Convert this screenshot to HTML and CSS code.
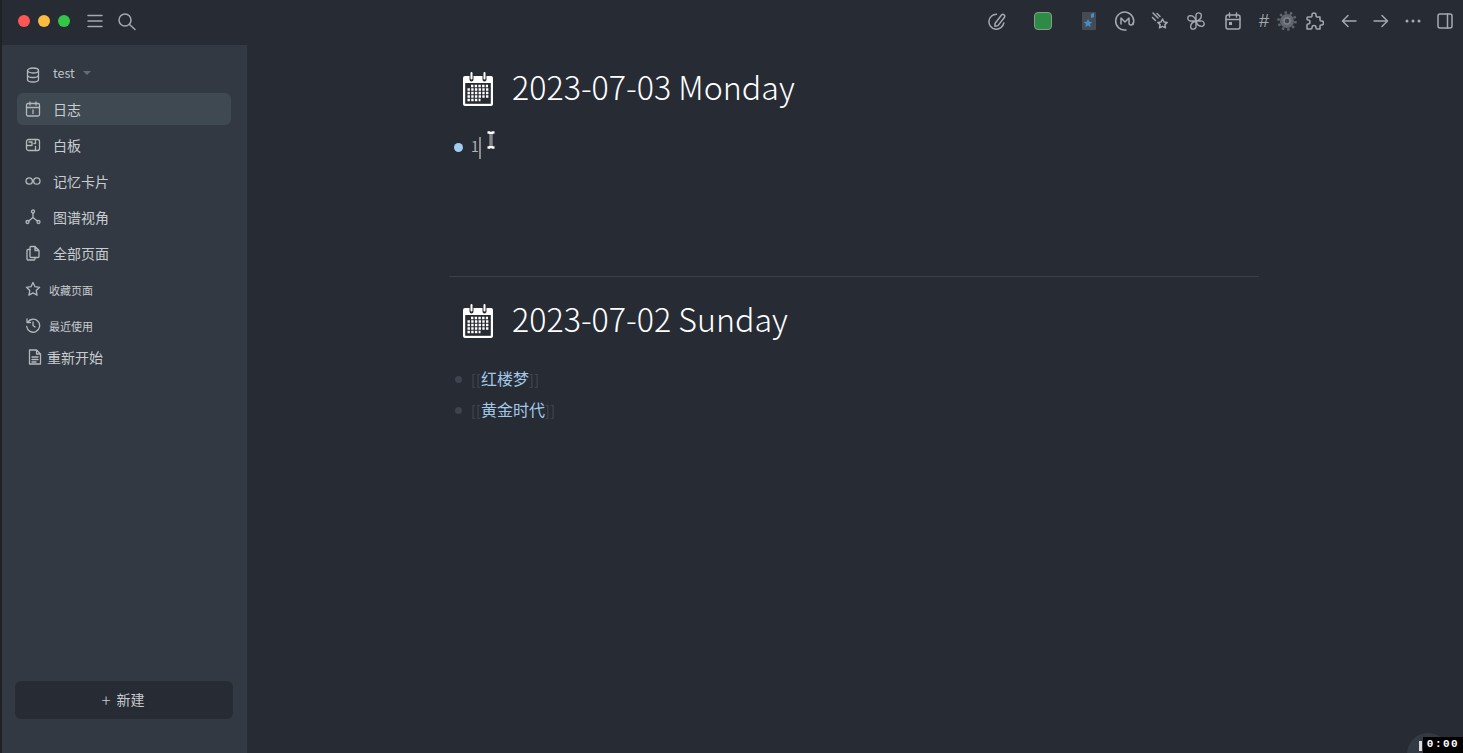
FILE: index.html
```html
<!DOCTYPE html>
<html lang="zh">
<head>
    <meta charset="UTF-8">
    <title>日志</title>
    <link rel="stylesheet" href="styles.css">
</head>
<body>

<svg class="defs" width="0" height="0">
    <symbol id="cal-big" viewBox="0 0 30 34">
        <path fill="#fff" d="M2 4h4.500v3.500a2 2 0 0 0 4 0V4h9v3.500a2 2 0 0 0 4 0V4H28a2 2 0 0 1 2 2v26a2 2 0 0 1-2 2H2a2 2 0 0 1-2-2V6a2 2 0 0 1 2-2z"/>
        <rect x="7.500" y="0" width="2" height="7.500" rx="1" fill="#fff"/>
        <rect x="20.500" y="0" width="2" height="7.500" rx="1" fill="#fff"/>
        <rect x="2.200" y="11" width="25.600" height="20.800" fill="#272b34"/>
        <path stroke="#fff" stroke-width="2.400" stroke-dasharray="2.400 1.300" d="M8 14h17M4.500 17.500h21M4.500 21h21M4.500 24.500h21M4.500 28h13"/>
    </symbol>
</svg>

<div class="app">
    <header class="topbar">
        <div class="topbar-left">
            <span class="light light-red"></span>
            <span class="light light-yellow"></span>
            <span class="light light-green"></span>
            <svg class="menu-icon" width="18" height="18" viewBox="0 0 18 18"><path d="M2 3.500h14M2 9h14M2 14.500h14"/></svg>
            <svg class="search-icon" width="20" height="20" viewBox="0 0 20 20"><circle cx="8" cy="8" r="6"/><path d="M12.500 12.500l5.500 5"/></svg>
        </div>
        <div class="toolbar">
            <span class="tool"><svg width="20" height="20" viewBox="0 0 20 20"><path d="M8 12.500l6.500-8.500a1.900 1.900 0 0 1 3 2.300l-6.500 8.300-3 .8z"/><path d="M9.500 3.200A7.500 7.500 0 1 0 16.800 12"/></svg></span>
            <span class="tool tool-green"><span class="green-box"></span></span>
            <span class="tool tool-stars">
                <span class="stars-box"><svg width="14" height="18" viewBox="0 0 14 18"><path class="blue" d="M9 2l3-1v4l-3 1z"/><path class="blue" d="M6 7l1.300 2.800 3 .3-2.200 2 .6 3-2.700-1.500L3.300 15l.6-3-2.200-2 3-.3z"/></svg></span>
            </span>
            <span class="tool"><svg width="22" height="22" viewBox="0 0 22 22"><path d="M19 14.500A9 9 0 1 0 12 20"/><path d="M7 14V8l4 4 4-4v5a2 2 0 0 0 4 0"/></svg></span>
            <span class="tool tool-shoot"><svg width="20" height="20" viewBox="0 0 20 20"><path d="M3 2l5 5M2.500 6.500l3 3M7 2.500l3 3"/><path d="M12.500 8l1.500 3 3.200.4-2.300 2.200.6 3.200-3-1.500-3 1.500.6-3.200-2.300-2.200 3.200-.4z"/></svg></span>
            <span class="tool"><svg width="18" height="18" viewBox="0 0 20 20"><path d="M10 10V4.500A3 3 0 0 1 16 3.500c0 3-2 5.500-6 6.500zM10 10h5.500a3 3 0 0 1 1 6c-3 0-5.500-2-6.500-6zM10 10v5.500a3 3 0 0 1-6 1c0-3 2-5.500 6-6.500zM10 10H4.500a3 3 0 0 1-1-6c3 0 5.500 2 6.500 6z"/></svg></span>
            <span class="tool tool-cal"><svg width="20" height="20" viewBox="0 0 20 20"><rect x="3" y="4" width="14" height="14" rx="2"/><path d="M3 8.500h14M6.500 2v4M13.500 2v4"/><rect class="solid" x="6" y="11" width="3" height="3"/></svg></span>
            <span class="tool tool-hash">#</span>
            <span class="tool tool-gear"><svg width="20" height="20" viewBox="0 0 20 20"><circle class="gear-teeth" cx="10" cy="10" r="8.500"/><circle class="gear-body" cx="10" cy="10" r="7"/><circle class="gear-ring" cx="10" cy="10" r="3"/></svg></span>
            <span class="tool tool-puzzle"><svg width="20" height="20" viewBox="0 0 20 20"><path d="M4 6h3a1 1 0 0 0 1-1V4a2 2 0 0 1 4 0v1a1 1 0 0 0 1 1h3v3a1 1 0 0 0 1 1h.5a2 2 0 0 1 0 4H17a1 1 0 0 0-1 1v3h-3a1 1 0 0 1-1-1v-.5a2 2 0 0 0-4 0v.5a1 1 0 0 1-1 1H3v-4a1 1 0 0 1 1-1 2 2 0 0 0 0-4 1 1 0 0 1-1-1V7a1 1 0 0 1 1-1z"/></svg></span>
            <span class="tool tool-nav"><svg width="18" height="18" viewBox="0 0 18 18"><path d="M16 9H2.500M8 3.500L2.500 9 8 14.500"/></svg></span>
            <span class="tool"><svg width="18" height="18" viewBox="0 0 18 18"><path d="M2 9h13.500M10 3.500L15.500 9 10 14.500"/></svg></span>
            <span class="tool"><svg width="18" height="18" viewBox="0 0 18 18"><circle class="solid" cx="3" cy="9" r="1.500"/><circle class="solid" cx="9" cy="9" r="1.500"/><circle class="solid" cx="15" cy="9" r="1.500"/></svg></span>
            <span class="tool"><svg width="18" height="18" viewBox="0 0 18 18"><rect x="2" y="2" width="14" height="14" rx="2"/><path d="M11.500 2v14"/></svg></span>
        </div>
    </header>

    <div class="body">
        <aside class="sidebar">
            <div class="repo">
                <svg class="nav-icon" width="16" height="16" viewBox="0 0 16 16"><ellipse cx="8" cy="3.500" rx="5.500" ry="2.500"/><path d="M2.500 3.500v9c0 1.400 2.500 2.500 5.500 2.500s5.500-1.100 5.500-2.500v-9M2.500 8c0 1.400 2.500 2.500 5.500 2.500s5.500-1.100 5.500-2.500"/></svg>
                <span class="repo-name">test</span>
                <span class="caret-down"></span>
            </div>
            <nav class="nav">
                <a class="nav-item active">
                    <svg class="nav-icon" width="16" height="16" viewBox="0 0 16 16"><rect x="1.500" y="2.500" width="13" height="12.500" rx="1.500"/><path d="M1.500 6.500h13M5 1v3M11 1v3M8 9v3.500"/></svg>
                    <span>日志</span>
                </a>
                <a class="nav-item">
                    <svg class="nav-icon" width="16" height="16" viewBox="0 0 16 16"><rect x="1.500" y="2.500" width="13" height="11" rx="2"/><path d="M1.500 8.500H7V5H4M10.500 2.500v4H9M10.500 9.500v4"/></svg>
                    <span>白板</span>
                </a>
                <a class="nav-item">
                    <svg class="nav-icon" width="16" height="16" viewBox="0 0 16 16"><circle cx="4.200" cy="8" r="3.200"/><circle cx="11.800" cy="8" r="3.200"/></svg>
                    <span>记忆卡片</span>
                </a>
                <a class="nav-item">
                    <svg class="nav-icon" width="16" height="16" viewBox="0 0 16 16"><circle cx="8" cy="2.500" r="1.500"/><circle cx="2.500" cy="13" r="1.500"/><circle cx="13.500" cy="13" r="1.500"/><path d="M8 4v4.500M8 8.500l-4.300 3.500M8 8.500l4.300 3.500"/></svg>
                    <span>图谱视角</span>
                </a>
                <a class="nav-item">
                    <svg class="nav-icon" width="16" height="16" viewBox="0 0 16 16"><path d="M6 1.500h4l4 4v6a1 1 0 0 1-1 1H6a1 1 0 0 1-1-1v-9a1 1 0 0 1 1-1zM10 1.500v4h4"/><path d="M5 4.500H3a1 1 0 0 0-1 1v8.500a1 1 0 0 0 1 1h6a1 1 0 0 0 1-1v-1.500"/></svg>
                    <span>全部页面</span>
                </a>
                <a class="nav-item nav-small">
                    <svg class="nav-icon" width="16" height="16" viewBox="0 0 16 16"><path d="M8 1.500l2 4.200 4.600.6-3.400 3.200.9 4.600L8 11.900l-4.100 2.200.9-4.600L1.400 6.300 6 5.700z"/></svg>
                    <span>收藏页面</span>
                </a>
                <a class="nav-item nav-small">
                    <svg class="nav-icon" width="16" height="16" viewBox="0 0 16 16"><path d="M2.500 5.500A6.500 6.500 0 1 1 1.700 9.500M2 2v3.500h3.500M8 5v3.500l2 1.500"/></svg>
                    <span>最近使用</span>
                </a>
                <a class="nav-item nav-page">
                    <svg class="nav-icon" width="14" height="16" viewBox="0 0 14 16"><path d="M1.500 1h7l4 4v10h-11zM8.500 1v4h4M4 8h6M4 10.500h6M4 13h4"/></svg>
                    <span>重新开始</span>
                </a>
            </nav>
            <button class="new-btn"><span class="plus">+</span>新建</button>
        </aside>

        <main class="main">
            <section class="journal journal-first">
                <h1 class="day-title">
                    <svg class="cal-icon" width="30" height="34"><use href="#cal-big"/></svg>
                    2023-07-03 Monday
                </h1>
                <div class="block">
                    <span class="bullet bullet-on"></span>
                    <span class="block-text">1<span class="text-caret"></span></span>
                </div>
            </section>

            <section class="journal">
                <h1 class="day-title">
                    <svg class="cal-icon" width="30" height="34"><use href="#cal-big"/></svg>
                    2023-07-02 Sunday
                </h1>
                <div class="block block-link">
                    <span class="bullet"></span>
                    <span class="link-text"><span class="brackets">[[</span><a class="page-ref">红楼梦</a><span class="brackets">]]</span></span>
                </div>
                <div class="block block-link">
                    <span class="bullet"></span>
                    <span class="link-text"><span class="brackets">[[</span><a class="page-ref">黄金时代</a><span class="brackets">]]</span></span>
                </div>
            </section>
        </main>
    </div>

    <svg class="ibeam" width="14" height="18" viewBox="0 0 14 18">
        <path class="ibeam-out" d="M3.500 1.500h2L7 3l1.500-1.500h2M7 3v12M3.500 16.500h2L7 15l1.500 1.500h2"/>
        <path class="ibeam-in" d="M7 3v12"/>
    </svg>
    <div class="help-circle"></div>
    <div class="timer">0:00</div>
</div>

</body>
</html>
```

FILE: styles.css
```css
* {
    box-sizing: border-box;
}

html, body {
    margin: 0;
    height: 100%;
    overflow: hidden;
}

body {
    font-family: 'Noto Sans CJK SC', 'Noto Sans', sans-serif;
    background-color: #272b34;
    color: #c8ccd1;
}

.defs {
    position: absolute;
}

.app {
    position: relative;
    display: flex;
    flex-direction: column;
    height: 753px;
    overflow: hidden;
    border-left: 2px solid #1e2126;
}

/* top bar */
.topbar {
    display: flex;
    align-items: center;
    justify-content: space-between;
    height: 45px;
    padding: 0 6px 3px 16px;
    background-color: #272b34;
    flex-shrink: 0;
}

.topbar-left {
    display: flex;
    align-items: center;
}

.light {
    width: 12px;
    height: 12px;
    border-radius: 50%;
    margin-right: 8px;
}

.light-red { background-color: #fc5753; }
.light-yellow { background-color: #fdbc40; }
.light-green { background-color: #33c748; margin-right: 16px; }

.topbar svg path,
.topbar svg circle,
.topbar svg rect {
    fill: none;
    stroke: #a5a9af;
    stroke-width: 1.5;
    stroke-linecap: round;
    stroke-linejoin: round;
}

.search-icon {
    margin-left: 13px;
    margin-top: 1px;
}

.toolbar {
    display: flex;
    align-items: center;
}

.tool {
    display: flex;
    align-items: center;
    justify-content: center;
    width: 24px;
    height: 24px;
    margin-left: 12px;
}

.tool-green { margin-left: 22px; }
.tool-stars { margin-left: 22px; }
.tool-shoot { margin-left: 11px; }
.tool-cal { margin-left: 13px; }
.tool-hash {
    width: 16px;
    margin-left: 11px;
    font-family: 'Liberation Sans', sans-serif;
    font-size: 18px;
    color: #a5a9af;
}
.tool-gear {
    width: 22px;
    margin-left: 4px;
}
.tool-puzzle { margin-left: 4px; }
.tool-nav { margin-left: 11px; }
.tool-nav ~ .tool { margin-left: 8px; }

.green-box {
    width: 18px;
    height: 18px;
    border-radius: 4px;
    border: 1px solid #8a9a8e;
    background-color: #2e8b45;
}

.stars-box {
    display: flex;
    width: 14px;
    height: 18px;
    background-color: #474c54;
    border-radius: 1px;
}

.topbar svg path.blue {
    fill: #3f8fd0;
    stroke: none;
}

.topbar svg .solid {
    fill: #a5a9af;
    stroke: none;
}

.topbar svg circle.gear-teeth {
    stroke: #62676e;
    stroke-width: 2.500;
    stroke-linecap: butt;
    stroke-dasharray: 2.400 2.940;
}

.topbar svg circle.gear-body {
    fill: #62676e;
    stroke: none;
}

.topbar svg circle.gear-ring {
    fill: #3c4048;
    stroke: #7d8187;
    stroke-width: 1.500;
}

/* layout */
.body {
    display: flex;
    flex: 1;
    min-height: 0;
}

.sidebar {
    display: flex;
    flex-direction: column;
    width: 245px;
    padding: 12px 0 34px;
    background-color: #323942;
}

.nav-icon {
    flex-shrink: 0;
    fill: none;
    stroke: #b4b8bd;
    stroke-width: 1.300;
    stroke-linecap: round;
    stroke-linejoin: round;
}

.repo {
    display: flex;
    align-items: center;
    height: 32px;
    padding-left: 23px;
    font-size: 12.500px;
}

.repo .nav-icon {
    margin-top: 4px;
}

.repo-name {
    margin-left: 12px;
    color: #bfc3c8;
    margin-top: -2px;
}

.caret-down {
    width: 0;
    height: 0;
    margin-left: 8px;
    border-left: 4px solid transparent;
    border-right: 4px solid transparent;
    border-top: 4px solid #666c74;
}

.nav {
    display: flex;
    flex-direction: column;
    flex: 1;
    padding: 4px 16px 0 15px;
    gap: 4px;
}

.nav-item {
    display: flex;
    align-items: center;
    height: 32px;
    padding-left: 8px;
    border-radius: 6px;
    font-size: 14px;
    color: #c8ccd1;
}

.nav-item span {
    margin-left: 12px;
}

.nav-item.active {
    background-color: #3f4952;
}

.nav-small span {
    margin-left: 8px;
    padding-top: 2px;
    font-size: 11px;
}

.nav-page {
    margin-top: -4px;
    padding-left: 11px;
}

.nav-page span {
    margin-left: 5px;
}

.new-btn {
    display: flex;
    align-items: center;
    justify-content: center;
    width: 218px;
    height: 38px;
    margin-left: 13px;
    padding: 0 2px 2px 0;
    border: none;
    border-radius: 6px;
    background-color: #272b34;
    color: #c8ccd1;
    font-family: inherit;
    font-size: 14px;
}

.plus {
    margin-right: 6px;
    font-size: 17px;
    font-weight: 300;
    line-height: 1;
}

/* journals */
.main {
    flex: 1;
    padding: 0 204px 0 202px;
}

.journal-first {
    height: 232px;
    border-bottom: 1px solid #3b4049;
}

.day-title {
    display: flex;
    align-items: center;
    height: 86px;
    margin: 0;
    padding: 0 0 4px 14px;
    font-size: 32.200px;
    font-weight: 300;
    color: #fff;
}

.cal-icon {
    margin: 6px 19px 0 0;
}

.journal + .journal .day-title {
    height: 87px;
    padding-bottom: 6px;
}

.block {
    display: flex;
    align-items: center;
    height: 31px;
    margin-left: 5px;
    font-size: 14px;
}

.journal-first .block {
    margin-top: 1px;
}

.bullet {
    display: block;
    width: 7px;
    height: 7px;
    margin: 0 9px 0 1px;
    border-radius: 50%;
    background-color: #3d4450;
}

.bullet-on {
    width: 9px;
    height: 9px;
    margin: 0 8px 0 0;
    background-color: #a0cdf0;
}

.block-text {
    color: #b0b5ba;
}

.text-caret {
    display: inline-block;
    width: 2px;
    height: 22px;
    background-color: #8a8e94;
    vertical-align: middle;
}

.block-link {
    font-size: 16px;
}

.link-text {
    padding-bottom: 4px;
}

.brackets {
    color: #444a55;
    font-size: 14px;
    letter-spacing: 0.300px;
}

.page-ref {
    color: #a3c8e6;
}

/* things lying over the page */
.ibeam {
    position: absolute;
    left: 482px;
    top: 131px;
    fill: none;
}

.ibeam-out {
    stroke: #fff;
    stroke-width: 2.600;
}

.ibeam-in {
    stroke: #111;
    stroke-width: 1;
}

.help-circle {
    position: absolute;
    right: 14px;
    bottom: -22px;
    width: 42px;
    height: 42px;
    border-radius: 50%;
    background-color: #343a44;
}

/* scrap of the help glyph that shows beside the timer */
.help-circle::before {
    content: "";
    display: block;
    width: 3px;
    height: 10px;
    margin: 8px 0 0 12px;
    background-color: #d8dadd;
}

.timer {
    position: absolute;
    right: 0;
    bottom: 0;
    width: 40px;
    height: 16px;
    background-color: #000;
    color: #fff;
    font-family: 'Liberation Mono', monospace;
    font-size: 11px;
    font-weight: bold;
    line-height: 15px;
    text-align: center;
    letter-spacing: 1.500px;
}
```
